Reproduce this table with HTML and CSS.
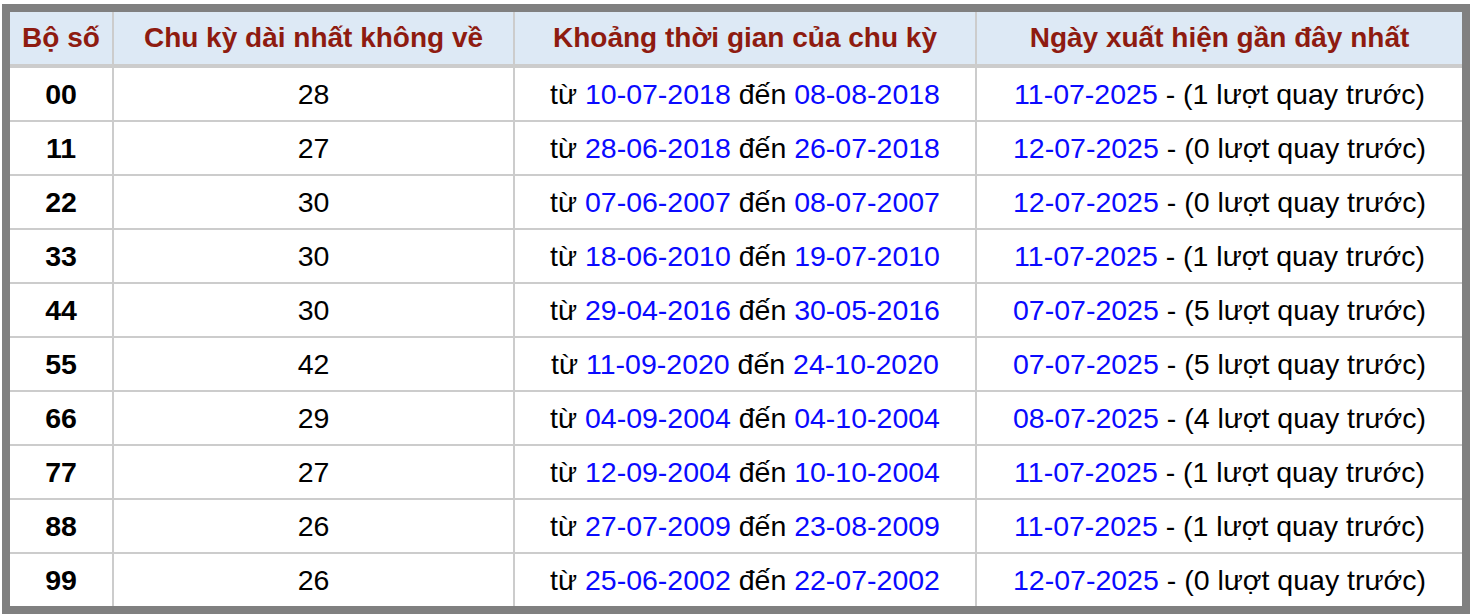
FILE: index.html
```html
<!DOCTYPE html>
<html lang="vi">
<head>
<meta charset="utf-8">
<title>Chu kỳ</title>
<link rel="stylesheet" href="styles.css">
</head>
<body>
<table class="tbl">
<colgroup><col class="c1"><col class="c2"><col class="c3"><col class="c4"></colgroup>
<thead>
<tr><th>Bộ số</th><th>Chu kỳ dài nhất không về</th><th>Khoảng thời gian của chu kỳ</th><th>Ngày xuất hiện gần đây nhất</th></tr>
</thead>
<tbody>
<tr><td class="num">00</td><td>28</td><td>từ <span class="d">10-07-2018</span> đến <span class="d">08-08-2018</span></td><td><span class="d">11-07-2025</span> - (1 lượt quay trước)</td></tr>
<tr><td class="num">11</td><td>27</td><td>từ <span class="d">28-06-2018</span> đến <span class="d">26-07-2018</span></td><td><span class="d">12-07-2025</span> - (0 lượt quay trước)</td></tr>
<tr><td class="num">22</td><td>30</td><td>từ <span class="d">07-06-2007</span> đến <span class="d">08-07-2007</span></td><td><span class="d">12-07-2025</span> - (0 lượt quay trước)</td></tr>
<tr><td class="num">33</td><td>30</td><td>từ <span class="d">18-06-2010</span> đến <span class="d">19-07-2010</span></td><td><span class="d">11-07-2025</span> - (1 lượt quay trước)</td></tr>
<tr><td class="num">44</td><td>30</td><td>từ <span class="d">29-04-2016</span> đến <span class="d">30-05-2016</span></td><td><span class="d">07-07-2025</span> - (5 lượt quay trước)</td></tr>
<tr><td class="num">55</td><td>42</td><td>từ <span class="d">11-09-2020</span> đến <span class="d">24-10-2020</span></td><td><span class="d">07-07-2025</span> - (5 lượt quay trước)</td></tr>
<tr><td class="num">66</td><td>29</td><td>từ <span class="d">04-09-2004</span> đến <span class="d">04-10-2004</span></td><td><span class="d">08-07-2025</span> - (4 lượt quay trước)</td></tr>
<tr><td class="num">77</td><td>27</td><td>từ <span class="d">12-09-2004</span> đến <span class="d">10-10-2004</span></td><td><span class="d">11-07-2025</span> - (1 lượt quay trước)</td></tr>
<tr><td class="num">88</td><td>26</td><td>từ <span class="d">27-07-2009</span> đến <span class="d">23-08-2009</span></td><td><span class="d">11-07-2025</span> - (1 lượt quay trước)</td></tr>
<tr><td class="num">99</td><td>26</td><td>từ <span class="d">25-06-2002</span> đến <span class="d">22-07-2002</span></td><td><span class="d">12-07-2025</span> - (0 lượt quay trước)</td></tr>
</tbody>
</table>
</body>
</html>
```
FILE: styles.css
```css
html, body {
  margin: 0;
  padding: 0;
  background: #ffffff;
}
body {
  padding: 4px 0 0 2px;
  font-family: "Liberation Sans", Arial, sans-serif;
}
.tbl {
  border-collapse: separate;
  border-spacing: 0;
  border: 8px solid #808080;
  table-layout: fixed;
  width: 1468px;
  font-size: 28.5px;
  color: #000;
}
.c1 { width: 104px; }
.c2 { width: 401px; }
.c3 { width: 462px; }
.c4 { width: auto; }
.tbl th, .tbl td {
  border: 0;
  border-right: 2px solid #cccccc;
  border-bottom: 2px solid #cccccc;
  text-align: center;
  padding: 0;
  height: 52px;
  box-sizing: content-box;
  white-space: nowrap;
}
.tbl th {
  background: #dde9f5;
  color: #8e1b10;
  font-weight: bold;
  font-size: 28px;
  border-bottom: 4px solid #cccccc;
}
.tbl tr > :last-child { border-right: 0; }
.tbl tbody tr:last-child td { border-bottom: 0; }
.num { font-weight: bold; }
.d { color: #0a0aff; }
```
